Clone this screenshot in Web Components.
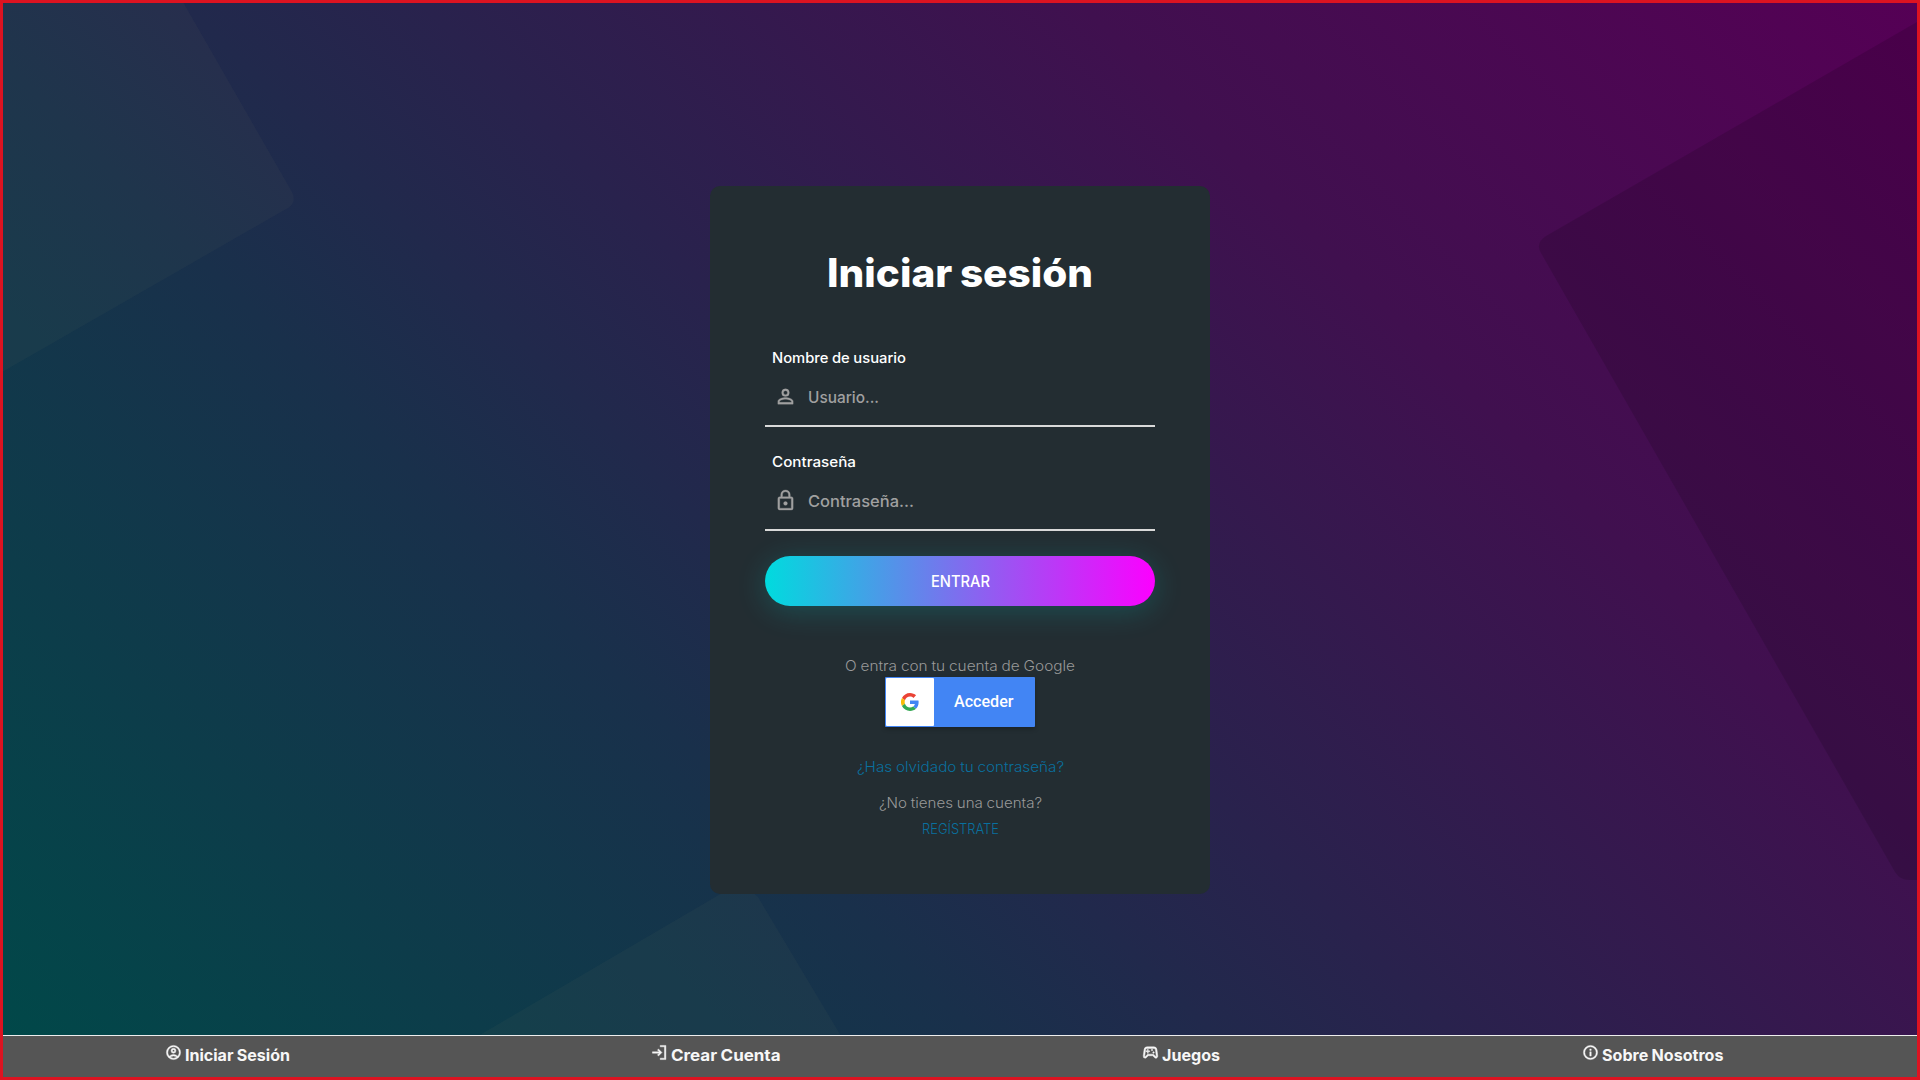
<!DOCTYPE html>
<html lang="es"><head><meta charset="utf-8"><title>Iniciar sesión</title>
<style>html,body{margin:0;height:100%;overflow:hidden}body{font-family:Inter,"Open Sans",sans-serif}</style></head>
<body><login-page></login-page>
<script>
const define=(name,html,setup)=>customElements.define(name,class extends HTMLElement{
  connectedCallback(){ if(this.shadowRoot)return; this.attachShadow({mode:'open'}).innerHTML=html; if(setup)setup(this,this.shadowRoot); }
});
// Widens or narrows a single line of text so that it fills the given width.
define('fit-text','<style>:host{display:block;white-space:nowrap;flex:none}span{display:inline-block;transform-origin:0 50%;word-spacing:-.03em}</style><span><slot></slot></span>',(el,root)=>{
  const w=+el.getAttribute('w'),s=root.querySelector('span');
  const n=s.getBoundingClientRect().width;
  s.style.transform='scaleX('+(w/n)+')'; s.style.marginRight=(w-n)+'px';
});
const icons={
 user:'<path d="M12 4a4 4 0 1 0 0 8 4 4 0 0 0 0-8zm0 1.9a2.1 2.1 0 1 1 0 4.2 2.1 2.1 0 0 1 0-4.2zM12 13c-2.67 0-8 1.34-8 4v3h16v-3c0-2.66-5.33-4-8-4zm6.1 5.1H5.9V17c0-.64 3.13-2.1 6.1-2.1s6.1 1.46 6.1 2.1z"/>',
 lock:'<path d="M12 17c1.1 0 2-.9 2-2s-.9-2-2-2-2 .9-2 2 .9 2 2 2zm6-9h-1V6A5 5 0 0 0 7 6v2H6a2 2 0 0 0-2 2v10c0 1.1.9 2 2 2h12a2 2 0 0 0 2-2V10a2 2 0 0 0-2-2zM8.9 6a3.1 3.1 0 0 1 6.2 0v2H8.9zM18 20H6V10h12z"/>',
 account:'<path d="M12 2a10 10 0 1 0 0 20 10 10 0 0 0 0-20zM7.35 18.5a8 8 0 0 1 9.3 0 8 8 0 0 1-9.3 0zm10.79-1.38a9.9 9.9 0 0 0-12.28 0 8 8 0 1 1 12.28 0zM12 6a3.5 3.5 0 1 0 0 7 3.5 3.5 0 0 0 0-7zm0 5a1.5 1.5 0 1 1 0-3 1.5 1.5 0 0 1 0 3z"/>',
 login:'<path d="M13 2h8v20h-8v-2h6V4h-6zM10.5 7l-1.4 1.4 2.6 2.6H2v2h9.7l-2.6 2.6 1.4 1.4 5-5z"/>',
 game:'<path d="m21.58 16.09-1.09-7.66A4 4 0 0 0 16.53 5H7.47a4 4 0 0 0-3.96 3.43l-1.09 7.66A2.545 2.545 0 0 0 4.94 19c.68 0 1.32-.27 1.8-.75L9 16h6l2.25 2.25a2.545 2.545 0 0 0 4.33-2.16zM19.48 17c-.25 0-.42-.12-.81-.5L15.83 14H8.17l-2.84 2.84a.54.54 0 0 1-.93-.46l1.09-7.66C5.63 7.74 6.48 7 7.47 7h9.06c.99 0 1.84.74 1.98 1.72l1.09 7.66c.03.24-.05.44-.12.62zM9 8H8v2H6v1h2v2h1v-2h2v-1H9zm8 4a1 1 0 1 1-2 0 1 1 0 0 1 2 0zm-2-3a1 1 0 1 1-2 0 1 1 0 0 1 2 0z" transform="matrix(1.07 0 0 1.15 -.84 -1.8)"/>',
 info:'<path d="M11 7h2v2h-2zm0 4h2v6h-2zm1-9a10 10 0 1 0 0 20 10 10 0 0 0 0-20zm0 18a8 8 0 1 1 0-16 8 8 0 0 1 0 16z"/>'};
define('line-icon','<style>:host{display:block;flex:none}svg{display:block;width:100%;height:100%;fill:currentColor;stroke:currentColor;stroke-width:var(--icon-stroke,.3)}</style><svg viewBox="0 0 24 24"></svg>',(el,r)=>r.querySelector('svg').innerHTML=icons[el.getAttribute('name')]);
define('form-field',`<style>
:host{display:block;height:80px}
.label{padding-left:7px;font:500 14px/21px Inter;color:#fff;height:21px}
.row{display:flex;align-items:center;border-bottom:2px solid #d9d9d9;color:#a0a0a0;padding-left:9px;gap:11px;box-sizing:border-box;height:59px}
line-icon{width:23px;height:23px;margin-bottom:1px}
.ph{font:500 16px/24px Inter}
</style><div class="label"><slot name="label"></slot></div><div class="row"><line-icon></line-icon><div class="ph"><slot></slot></div></div>`,(el,r)=>{
 const old=r.querySelector('line-icon'),i=document.createElement('line-icon');i.setAttribute('name',el.getAttribute('icon'));old.replaceWith(i);});
define('google-button',`<style>
:host{display:flex;width:150px;height:50px;background:#4285f4;border-radius:1px;box-shadow:0 2px 4px rgba(0,0,0,.25);align-items:center}
.logo{width:48px;height:48px;background:#fff;border-radius:1px;margin-left:1px;display:grid;place-items:center}
svg{width:18px;height:18px;display:block}.t{font:500 16px/24px Roboto;color:#fff;margin-left:20px}
</style><div class="logo"><svg viewBox="0 0 48 48"><path fill="#EA4335" d="M24 9.5c3.54 0 6.71 1.22 9.21 3.6l6.85-6.85C35.9 2.38 30.47 0 24 0 14.62 0 6.51 5.38 2.56 13.22l7.98 6.19C12.43 13.72 17.74 9.5 24 9.5z"/><path fill="#4285F4" d="M46.98 24.55c0-1.57-.15-3.09-.38-4.55H24v9.02h12.94c-.58 2.96-2.26 5.48-4.78 7.18l7.73 6c4.51-4.18 7.09-10.36 7.09-17.65z"/><path fill="#FBBC05" d="M10.53 28.59a14.5 14.5 0 0 1 0-9.18l-7.98-6.19a24 24 0 0 0 0 21.56z"/><path fill="#34A853" d="M24 48c6.48 0 11.93-2.13 15.89-5.81l-7.73-6c-2.15 1.45-4.92 2.3-8.16 2.3-6.26 0-11.57-4.22-13.47-9.91l-7.98 6.19C6.51 42.62 14.62 48 24 48z"/></svg></div><fit-text class="t" w="59.5">Acceder</fit-text>`);
define('login-card',`<style>
:host{display:flex;flex-direction:column;align-items:center;box-sizing:border-box;width:500px;height:708px;padding:57px 55px 0;border-radius:10px;background:#232d32}
h1{margin:0 0 44px;font:800 39px/60px Inter;color:#fff}
form-field{width:390px}form-field+form-field{margin-top:24px}
.enter{width:390px;height:50px;margin:25px 0 50px;border-radius:25px;background:linear-gradient(90deg,#00dbde,#fc00ff);box-shadow:0 5px 30px rgba(0,219,222,.2);display:flex;align-items:center;justify-content:center;color:#fff;font:500 16px/24px Inter}
.s{font:300 14px/20px Inter;color:#999}.b{color:#09709f}
google-button{margin:1px 0 30px}.m{margin:16px 0 6px}
</style><h1><fit-text w="266">Iniciar sesión</fit-text></h1>
<form-field icon="user"><fit-text slot="label" w="134">Nombre de usuario</fit-text><fit-text w="71">Usuario...</fit-text></form-field>
<form-field icon="lock"><fit-text slot="label" w="84">Contraseña</fit-text><fit-text w="106">Contraseña...</fit-text></form-field>
<div class="enter"><fit-text w="59">ENTRAR</fit-text></div>
<fit-text class="s" w="230">O entra con tu cuenta de Google</fit-text><google-button></google-button>
<fit-text class="s b" w="207">¿Has olvidado tu contraseña?</fit-text><fit-text class="s m" w="163">¿No tienes una cuenta?</fit-text><fit-text class="s b" w="77">REGÍSTRATE</fit-text>`);
define('bottom-nav',`<style>
:host{display:flex;height:42px;background:#555;border-top:1px solid #eee;box-sizing:border-box;color:#f7f7f7;font:700 16px/24px Inter}
div{flex:0 0 478.5px;display:flex;gap:3px;padding-top:7px;box-sizing:border-box}
line-icon{width:17px;height:17px;margin-top:1px;--icon-stroke:.6}
.a{padding-left:162px}.b{padding-left:169.5px}.c{padding-left:182px}.d{padding-left:143px}
</style><div class="a"><line-icon name="account"></line-icon><fit-text w="105">Iniciar Sesión</fit-text></div>
<div class="b"><line-icon name="login"></line-icon><fit-text w="109.5">Crear Cuenta</fit-text></div>
<div class="c"><line-icon name="game"></line-icon><fit-text w="58">Juegos</fit-text></div>
<div class="d"><line-icon name="info"></line-icon><fit-text w="121.5">Sobre Nosotros</fit-text></div>`);
define('page-backdrop',`<style>:host{display:block;position:absolute;inset:0}svg{display:block;width:100%;height:100%}</style>
<svg viewBox="0 0 1914 1074" preserveAspectRatio="none"><path fill="#949468" fill-opacity=".055" d="M-1 -1H180L289 189Q294 199 285 205L-1 369Z"/><path fill="#000" fill-opacity=".13" d="M1914 19L1543 233Q1532 240 1538 250L1892 869Q1897 877 1906 877L1914 877Z"/><path fill="#949468" fill-opacity=".055" d="M475 1033L726 886Q740 878 748 888L755 894 838 1033Z"/></svg>`);
define('login-page',`<style>
:host{display:flex;flex-direction:column;position:relative;box-sizing:border-box;width:1920px;height:1080px;border:3px solid #dc1321;background:linear-gradient(45deg,#004949,#19304b 34%,#29224d 50%,#40104f 72%,#550055) padding-box}
main{position:relative;flex:1;display:flex;justify-content:center;align-items:flex-start;padding-top:183px;box-sizing:border-box;min-height:0}
bottom-nav{position:relative}
</style><page-backdrop></page-backdrop><main><login-card></login-card></main><bottom-nav></bottom-nav>`);
</script></body></html>
